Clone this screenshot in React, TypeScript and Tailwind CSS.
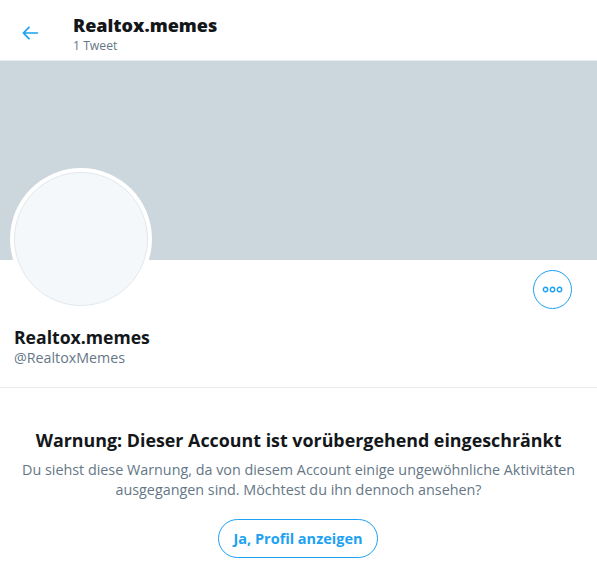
import React from "react";

export default function App() {
  return (
    <div className="w-[597px] h-[582px] overflow-hidden bg-white font-['Open_Sans','Noto_Sans',sans-serif] text-[#14171a]">
      <header className="h-[61px] flex items-start border-b border-[#e6ecf0]">
        <div className="w-[73px] pl-[20px] pt-[23px] shrink-0">
          <svg viewBox="0 0 24 24" className="w-[20px] h-[20px] fill-[#1da1f2] block">
            <path d="M21 11H6.4l5.3-5.3a1 1 0 0 0-1.4-1.4l-7 7a1 1 0 0 0 0 1.4l7 7a1 1 0 0 0 1.4-1.4L6.4 13H21a1 1 0 0 0 0-2z" />
          </svg>
        </div>
        <div className="flex flex-col pt-[13px]">
          <div className="text-[18px] leading-[24px] font-extrabold">Realtox.memes</div>
          <div className="mt-[1px] text-[12.2px] leading-[16px] text-[#657786]">1 Tweet</div>
        </div>
      </header>
      <div className="h-[199px] bg-[#ccd6dd]" />
      <div className="relative h-[128px] border-b border-[#e6ecf0] pl-[14px] pr-[25px]">
        <div className="absolute left-[10px] top-[-92px] w-[142px] h-[142px] rounded-full bg-white p-[4px]">
          <div className="w-full h-full rounded-full bg-[#f5f8fa] border border-[#e1e8ed]" />
        </div>
        <div className="flex justify-end pt-[10px]">
          <button className="w-[39px] h-[39px] rounded-full border border-[#1da1f2] flex items-center justify-center">
            <svg viewBox="0 0 21 7" className="w-[21px] h-[7px] block fill-none stroke-[#1da1f2] stroke-[1.4]">
              <circle cx="3.5" cy="3.5" r="2.2" />
              <circle cx="10.5" cy="3.5" r="2.2" />
              <circle cx="17.5" cy="3.5" r="2.2" />
            </svg>
          </button>
        </div>
        <div className="mt-[16px] text-[17.6px] leading-[24px] font-bold">Realtox.memes</div>
        <div className="mt-[-1px] text-[14.25px] leading-[20px] text-[#657786]">@RealtoxMemes</div>
      </div>
      <div className="flex flex-col items-center text-center pt-[40px]">
        <h2 className="text-[17.85px] leading-[24px] font-bold">Warnung: Dieser Account ist vorübergehend eingeschränkt</h2>
        <p className="mt-[8px] text-[14.35px] leading-[20px] text-[#657786] w-[570px]">
          Du siehst diese Warnung, da von diesem Account einige ungewöhnliche Aktivitäten ausgegangen sind. Möchtest du ihn dennoch ansehen?
        </p>
        <button className="mt-[19px] mr-[1px] w-[160px] h-[39px] rounded-full border border-[#1da1f2] text-[14.5px] font-bold text-[#1da1f2]">
          Ja, Profil anzeigen
        </button>
      </div>
    </div>
  );
}
